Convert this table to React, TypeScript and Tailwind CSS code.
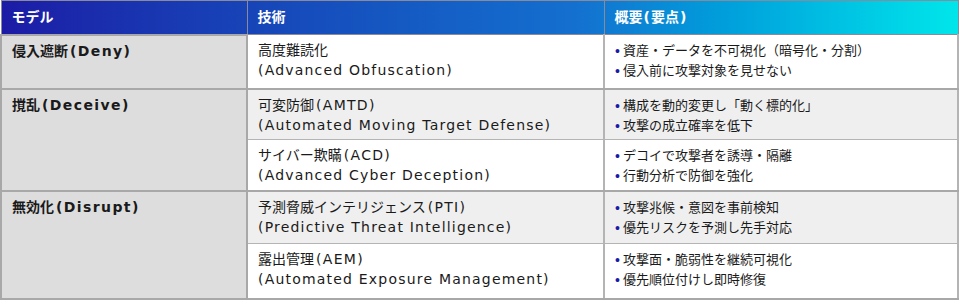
import React from 'react';

type Tech = { name: string; abbr?: string; en: string; points: string[] };
type Group = { model: string; modelEn: string; techs: Tech[] };

const groups: Group[] = [
  {
    model: '侵入遮断',
    modelEn: '(Deny)',
    techs: [
      {
        name: '高度難読化',
        en: '(Advanced Obfuscation)',
        points: ['資産・データを不可視化（暗号化・分割）', '侵入前に攻撃対象を見せない'],
      },
    ],
  },
  {
    model: '撹乱',
    modelEn: '(Deceive)',
    techs: [
      {
        name: '可変防御',
        abbr: '(AMTD)',
        en: '(Automated Moving Target Defense)',
        points: ['構成を動的変更し「動く標的化」', '攻撃の成立確率を低下'],
      },
      {
        name: 'サイバー欺瞞',
        abbr: '(ACD)',
        en: '(Advanced Cyber Deception)',
        points: ['デコイで攻撃者を誘導・隔離', '行動分析で防御を強化'],
      },
    ],
  },
  {
    model: '無効化',
    modelEn: '(Disrupt)',
    techs: [
      {
        name: '予測脅威インテリジェンス',
        abbr: '(PTI)',
        en: '(Predictive Threat Intelligence)',
        points: ['攻撃兆候・意図を事前検知', '優先リスクを予測し先手対応'],
      },
      {
        name: '露出管理',
        abbr: '(AEM)',
        en: '(Automated Exposure Management)',
        points: ['攻撃面・脆弱性を継続可視化', '優先順位付けし即時修復'],
      },
    ],
  },
];

// row heights per group, in px
const heights = [[54], [51, 51], [53, 55]];

export default function App() {
  return (
    <div className="w-[960px] h-[301px] bg-white font-['DejaVu_Sans','Noto_Sans_CJK_JP',sans-serif] text-[#1a1a1a]">
      <table className="w-[959px] border-collapse table-fixed">
        <colgroup>
          <col className="w-[246px]" />
          <col className="w-[357px]" />
          <col />
        </colgroup>
        <thead>
          <tr className="h-[34px] bg-gradient-to-r from-[#1c1aa6] via-[#1470cf] via-60% to-[#00e6ea]">
            <th className="border border-[#8a8a9a] px-[10px] text-left text-[14px] font-bold text-white">モデル</th>
            <th className="border border-[#8a8a9a] px-[10px] text-left text-[14px] font-bold text-white">技術</th>
            <th className="border border-[#8a8a9a] px-[10px] text-left text-[14px] font-bold text-white">
              概要<span className="px-[1px]">(</span>要点<span className="px-[1px]">)</span>
            </th>
          </tr>
        </thead>
        <tbody>
          {groups.map((g, gi) =>
            g.techs.map((t, ti) => (
              <tr
                key={`${gi}-${ti}`}
                style={{ height: heights[gi][ti] }}
                className={ti === 0 && g.techs.length > 1 ? 'bg-[#efefef]' : 'bg-white'}
              >
                {ti === 0 && (
                  <td
                    rowSpan={g.techs.length}
                    className="border-2 border-[#a8a8a8] bg-[#dddddd] px-[10px] pt-[5px] align-top text-[14px] font-bold"
                  >
                    {g.model}
                    <span className="ml-[2px] tracking-[1.4px]">{g.modelEn}</span>
                  </td>
                )}
                <td
                  className={`border-[#b4b4b4] border-x-2 px-[10px] pt-[5px] align-top text-[14px] leading-[20px] ${
                    ti === g.techs.length - 1 ? 'border-b-2 border-b-[#a8a8a8]' : 'border-b'
                  }`}
                >
                  <div>
                    {t.name}
                    {t.abbr && <span className="ml-[2px] tracking-[1.3px]">{t.abbr}</span>}
                  </div>
                  <div className="tracking-[1.2px]">{t.en}</div>
                </td>
                <td
                  className={`border-[#b4b4b4] border-x-2 pl-[10px] pt-[6px] align-top text-[13px] leading-[20px] ${
                    ti === g.techs.length - 1 ? 'border-b-2 border-b-[#a8a8a8]' : 'border-b'
                  }`}
                >
                  {t.points.map((p) => (
                    <div key={p} className="flex items-center">
                      <span className="mr-[3px] font-['Liberation_Sans',sans-serif] text-[14px] text-[#1a1aa8]">•</span>
                      <span>{p}</span>
                    </div>
                  ))}
                </td>
              </tr>
            ))
          )}
        </tbody>
      </table>
    </div>
  );
}
